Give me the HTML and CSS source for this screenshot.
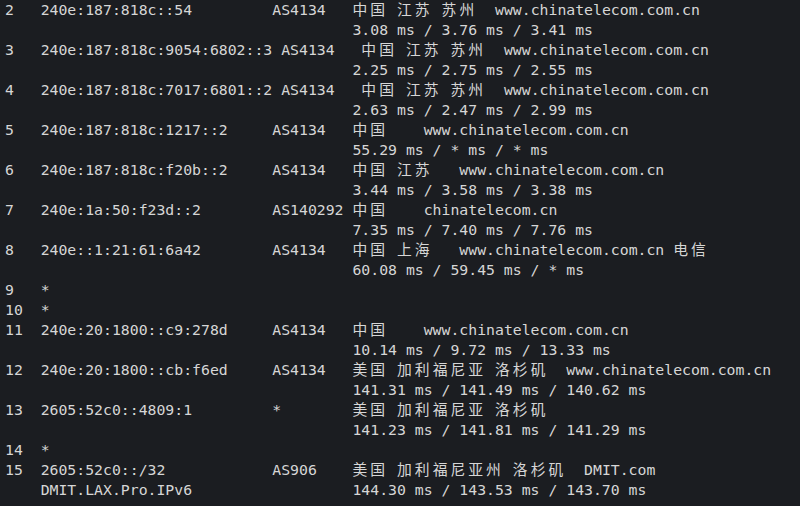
FILE: index.html
```html
<!DOCTYPE html>
<html>
<head>
	<meta charset="utf-8">
	<title>traceroute</title>
	<link rel="stylesheet" href="styles.css">
</head>
<body>
<pre class="term">2   240e:187:818c::54         AS4134   <span class="cjk">中国</span> <span class="cjk">江苏</span> <span class="cjk">苏州</span>  www.chinatelecom.com.cn
                                       3.08 ms / 3.76 ms / 3.41 ms
3   240e:187:818c:9054:6802::3 AS4134   <span class="cjk">中国</span> <span class="cjk">江苏</span> <span class="cjk">苏州</span>  www.chinatelecom.com.cn
                                       2.25 ms / 2.75 ms / 2.55 ms
4   240e:187:818c:7017:6801::2 AS4134   <span class="cjk">中国</span> <span class="cjk">江苏</span> <span class="cjk">苏州</span>  www.chinatelecom.com.cn
                                       2.63 ms / 2.47 ms / 2.99 ms
5   240e:187:818c:1217::2     AS4134   <span class="cjk">中国</span>    www.chinatelecom.com.cn
                                       55.29 ms / * ms / * ms
6   240e:187:818c:f20b::2     AS4134   <span class="cjk">中国</span> <span class="cjk">江苏</span>   www.chinatelecom.com.cn
                                       3.44 ms / 3.58 ms / 3.38 ms
7   240e:1a:50:f23d::2        AS140292 <span class="cjk">中国</span>    chinatelecom.cn
                                       7.35 ms / 7.40 ms / 7.76 ms
8   240e::1:21:61:6a42        AS4134   <span class="cjk">中国</span> <span class="cjk">上海</span>   www.chinatelecom.com.cn <span class="cjk">电信</span>
                                       60.08 ms / 59.45 ms / * ms
9   *
10  *
11  240e:20:1800::c9:278d     AS4134   <span class="cjk">中国</span>    www.chinatelecom.com.cn
                                       10.14 ms / 9.72 ms / 13.33 ms
12  240e:20:1800::cb:f6ed     AS4134   <span class="cjk">美国</span> <span class="cjk">加利福尼亚</span> <span class="cjk">洛杉矶</span>  www.chinatelecom.com.cn
                                       141.31 ms / 141.49 ms / 140.62 ms
13  2605:52c0::4809:1         *        <span class="cjk">美国</span> <span class="cjk">加利福尼亚</span> <span class="cjk">洛杉矶</span>
                                       141.23 ms / 141.81 ms / 141.29 ms
14  *
15  2605:52c0::/32            AS906    <span class="cjk">美国</span> <span class="cjk">加利福尼亚州</span> <span class="cjk">洛杉矶</span>  DMIT.com
    DMIT.LAX.Pro.IPv6                  144.30 ms / 143.53 ms / 143.70 ms
</pre>
</body>
</html>
```

FILE: styles.css
```css
html, body {
	margin: 0;
	background-color: #1b1d21;
}

.term {
	margin: 0;
	padding: 0 0 0 5px;
	font-family: "DejaVu Sans Mono", "Noto Sans CJK SC", monospace;
	font-size: 14.8px;
	line-height: 20px;
	color: #d6d6d6;
	white-space: pre;
	overflow: hidden;
}

/* wide chars take two terminal cells */
.cjk {
	letter-spacing: calc(2ch - 1em);
}
```
